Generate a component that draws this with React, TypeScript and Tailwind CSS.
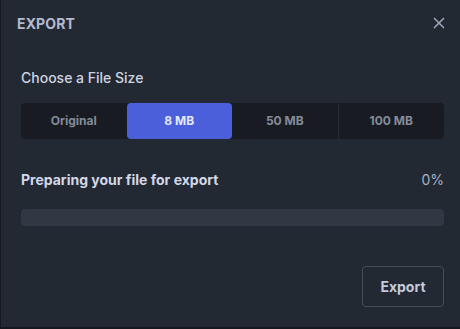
import { X } from "lucide-react";

const sizes = ["Original", "8 MB", "50 MB", "100 MB"];

export default function App() {
  const selected = "8 MB";
  return (
    <div className="h-[329px] w-[460px] bg-[#15181d] font-['Inter',sans-serif]">
      <div className="ml-px h-[327px] bg-[#232932] flex flex-col">
        <div className="flex items-center justify-between pl-4 pr-[12px] pt-[14px] h-[32px]">
          <h1 className="text-[14px] font-bold text-[#b3bad1] tracking-[0.01em]">EXPORT</h1>
          <button className="text-[#9ca3b6]">
            <X className="w-[18px] h-[18px]" strokeWidth={2.2} />
          </button>
        </div>

        <div className="pl-5 pr-[16px] mt-[36px]">
          <p className="text-[14px] font-medium text-[#cfd4e2] leading-[20px]">Choose a File Size</p>
          <div className="mt-[15px] flex h-9 rounded-[4px] bg-[#181c22]">
            {sizes.map((s, i) => {
              const active = s === selected;
              const showDivider = i > 0 && !active && sizes[i - 1] !== selected;
              return (
                <button
                  key={s}
                  className={`flex-1 flex items-center justify-center text-[12px] font-bold rounded-[4px] ${
                    active ? "bg-[#4b5fda] text-[#e4e8f8]" : "text-[#848b9a]"
                  } ${showDivider ? "border-l border-[#262b33] rounded-l-none" : ""}`}
                >
                  {s}
                </button>
              );
            })}
          </div>

          <div className="mt-[31px] flex items-center justify-between">
            <p className="text-[14px] font-bold text-[#d3d8e8] leading-[20px]">Preparing your file for export</p>
            <span className="text-[14px] text-[#aab1c2] leading-[20px]">0%</span>
          </div>
          <div className="mt-[19px] h-[17px] rounded-[4px] bg-[#323843]" />

          <div className="mt-[40px] flex justify-end">
            <button className="h-[41px] w-[82px] rounded-[4px] border border-[#474d58] text-[14px] font-bold text-[#c5cadb]">
              Export
            </button>
          </div>
        </div>
      </div>
    </div>
  );
}
